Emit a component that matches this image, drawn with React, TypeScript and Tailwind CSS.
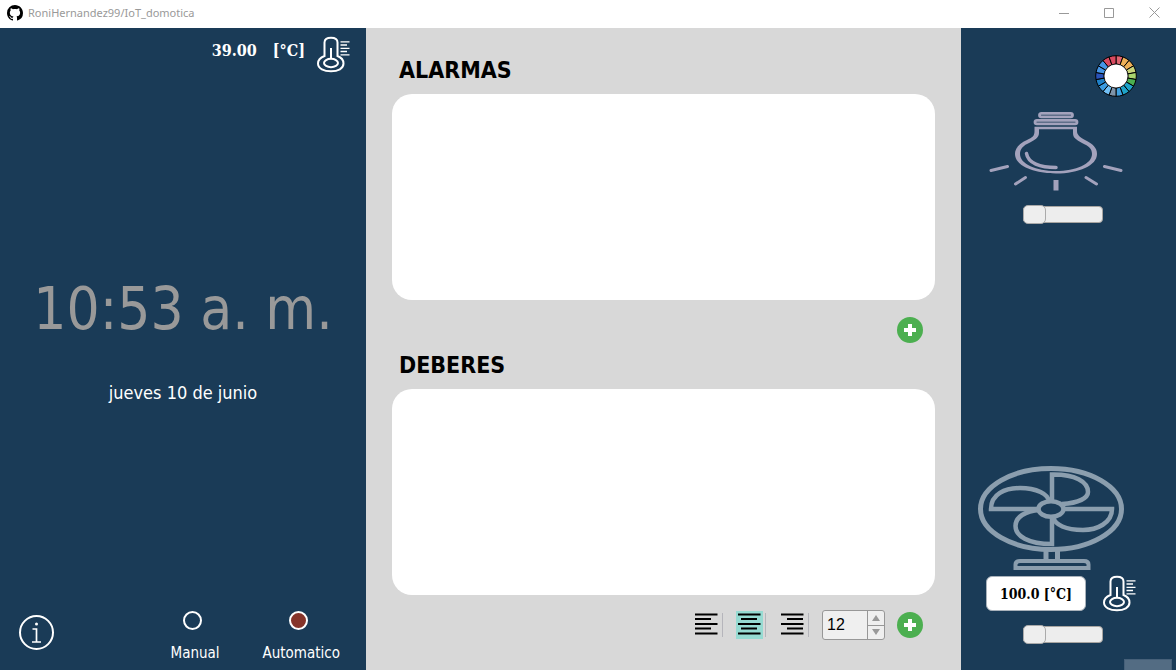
import React from "react";
import { VscGithubInverted } from "react-icons/vsc";

function Thermometer() {
  return (
    <svg width="34" height="37" viewBox="0 0 34 37" fill="none" stroke="white" strokeWidth="2" aria-hidden="true">
      <path d="M7.500 20V6.500C7.500 3 10 1.800 14 1.800S20.500 3 20.500 6.500V20C24.500 21.500 26.500 24 26.500 27.500C26.500 32.500 21 35.300 14 35.300S1 32.500 1 27.500C1 24 3.500 21.500 7.500 20Z" />
      <ellipse cx="14" cy="27" rx="7" ry="4.200" />
      <path d="M14 12V23" />
      <path strokeWidth="1.300" d="M23.500 5.800H32.500M23.500 9H30M23.500 12.300H32.500M23.500 15.500H30M23.500 18.800H32.500" />
    </svg>
  );
}

const WHEEL = ["#e06470", "#edb058", "#edb058", "#c8d47a", "#a9d46e", "#4caf50", "#1fa3c8", "#1fa3c8", "#3ea0e0", "#7d93a8", "#72bff5", "#3b9be0", "#1f80c8", "#2952b8", "#4594e4", "#4594e4", "#d94a60", "#d94a60"];

function ColorWheel() {
  const pt = (r: number, i: number) => {
    const a = (i / WHEEL.length) * Math.PI * 2 - Math.PI / 2;
    return `${21 + r * Math.cos(a)} ${21 + r * Math.sin(a)}`;
  };
  return (
    <svg width="42" height="42" viewBox="0 0 42 42" aria-hidden="true">
      {WHEEL.map((c, i) => (
        <path key={i} fill={c} stroke="black" strokeWidth="1" d={`M${pt(12, i)}L${pt(20.3, i)}A20.3 20.3 0 0 1 ${pt(20.3, i + 1)}L${pt(12, i + 1)}Z`} />
      ))}
      <circle cx="21" cy="21" r="12" fill="white" stroke="black" strokeWidth="0.800" />
    </svg>
  );
}

function Bulb() {
  return (
    <svg width="134" height="80" viewBox="0 0 134 80" fill="none" stroke="#a3a2bc" strokeWidth="2.800" aria-hidden="true">
      <rect x="50.500" y="2.300" width="33" height="3.600" rx="1.800" />
      <rect x="46" y="9.300" width="42" height="3.600" rx="1.800" />
      <path
        fill="#a3a2bc"
        stroke="none"
        fillRule="evenodd"
        d="M45.500 15.800H88V20C88 24 91 26 96 29C104 33 108 37 108 43C108 54.500 90 62.500 67 62.500S26 54.500 26 43C26 37 31 32 38 29C43.500 26.500 45.500 25 45.500 20ZM50 18.300V22C50 26.500 46 29 41 31.500C34 34.500 31 38 31 43C31 53 47 60 67 60S103 53 103 43C103 38 100 35 93 32C87 28.500 84 27 84 22V18.300Z"
      />
      <path strokeWidth="3.500" strokeLinecap="round" d="M37.500 42.500C39 52 51 56.500 67 56.500" />
      <path strokeWidth="3" strokeLinecap="round" d="M2 59.500L18.500 55.500M26.500 73L36.500 66.500M132 59.500L115.500 55.500M107.500 73L97 66.500" />
      <path strokeWidth="5" d="M67 69V79.500" />
    </svg>
  );
}

function Fan() {
  return (
    <svg width="146" height="104" viewBox="0 0 146 104" fill="none" stroke="#8b9eae" strokeWidth="5" aria-hidden="true">
      <ellipse cx="73" cy="43" rx="70.500" ry="40.500" />
      <ellipse cx="73" cy="43" rx="12.500" ry="7.800" strokeWidth="4.500" />
      <g strokeWidth="4.500">
        <path d="M74 35V8.500C97 8 110 16 110 26C110 32 101 37 84 38" />
        <path d="M85 43H134C134 57 119 64 105 64C88 64 77 59 75 51" />
        <path d="M74 51V78C50 78 37.500 70 37.500 60C37.500 51 47 45 62 44" />
        <path d="M61 43H13C13 28 27 22 42 22C58 22 71 28 71 36" />
      </g>
      <path d="M68 84V94M79.500 84V94" />
      <path strokeWidth="4" d="M37.500 102V98.500Q37.500 95 42 95H106Q110.500 95 110.500 98.500V102Z" />
    </svg>
  );
}

function AddButton({ label }: { label: string }) {
  return (
    <button aria-label={label} className="flex size-[26px] shrink-0 items-center justify-center rounded-full bg-[#4caf50]">
      <svg width="12" height="12" viewBox="0 0 12 12" fill="white" aria-hidden="true">
        <path d="M4 0H8V4H12V8H8V12H4V8H0V4H4Z" />
      </svg>
    </button>
  );
}

const ALIGN_LABELS = { left: "Alinear a la izquierda", center: "Centrar", right: "Alinear a la derecha" };

function AlignButton({ kind, active = false }: { kind: "left" | "center" | "right"; active?: boolean }) {
  const inset = kind === "left" ? 0 : kind === "center" ? 3 : 6;
  return (
    <div className="flex items-center gap-[2px]">
      <button
        aria-label={ALIGN_LABELS[kind]}
        aria-pressed={active}
        className={`flex h-7 w-[27px] items-center justify-center ${active ? "bg-[#96dbd2]" : ""}`}
      >
        <svg width="23" height="24" viewBox="0 0 23 24" fill="black" aria-hidden="true">
          <path d="M0 0.500H22.500V2.500H0ZM0 10H22.500V12H0ZM0 19.500H22.500V21.500H0Z" />
          <path d={`M${inset} 5H${inset + 16}V7H${inset}ZM${inset} 14.500H${inset + 16}V16.500H${inset}Z`} />
        </svg>
      </button>
      <span className="h-6 w-px bg-[#b5b5bb]" />
    </div>
  );
}

function Slider({ label }: { label: string }) {
  return (
    <input
      type="range"
      aria-label={label}
      defaultValue={0}
      className="h-[19px] w-20 appearance-none bg-transparent [&::-webkit-slider-runnable-track]:h-[17px] [&::-webkit-slider-runnable-track]:rounded-[4px] [&::-webkit-slider-runnable-track]:border [&::-webkit-slider-runnable-track]:border-[#a8a5a1] [&::-webkit-slider-runnable-track]:bg-[#ededed] [&::-webkit-slider-thumb]:-mt-[2px] [&::-webkit-slider-thumb]:-ml-px [&::-webkit-slider-thumb]:h-[19px] [&::-webkit-slider-thumb]:w-[23px] [&::-webkit-slider-thumb]:appearance-none [&::-webkit-slider-thumb]:rounded-[5px] [&::-webkit-slider-thumb]:border [&::-webkit-slider-thumb]:border-[#aaa] [&::-webkit-slider-thumb]:bg-[#eee]"
    />
  );
}

function ModeOption({ label, checked = false }: { label: string; checked?: boolean }) {
  return (
    <label className="flex flex-col items-center gap-[13px] text-[15px] leading-5 text-white">
      <input type="radio" name="mode" defaultChecked={checked} className="size-[19px] appearance-none rounded-full border-2 border-white checked:bg-[#86342a]" />
      <span className="pl-[6px]">{label}</span>
    </label>
  );
}

function NotesPanel({ title }: { title: string }) {
  return (
    <>
      <h2 className="pl-[7px] text-[23px] leading-7 font-bold text-black">{title}</h2>
      <textarea aria-label={title} className="mt-[10px] h-[206px] w-full resize-none rounded-[20px] bg-white p-4 outline-none" />
    </>
  );
}

export default function App() {
  return (
    <div className="relative flex min-h-screen flex-col bg-[#1a3b57] font-['DejaVu_Sans_Condensed','DejaVu_Sans',sans-serif]">
      <header className="flex h-7 items-center bg-white pb-[2px] pl-[7px]">
        <VscGithubInverted size={16} color="black" aria-hidden="true" />
        <span className="ml-[5px] flex-1 font-['Noto_Sans','Open_Sans',sans-serif] text-[11px] text-[#999]">RoniHernandez99/IoT_domotica</span>
        <div className="flex self-start text-[#999]">
          <button aria-label="Minimizar" className="flex h-6 w-[45px] items-center justify-center">
            <svg width="11" height="11" stroke="currentColor" fill="none" aria-hidden="true"><path d="M0 6.500H10" /></svg>
          </button>
          <button aria-label="Maximizar" className="flex h-6 w-[45px] items-center justify-center">
            <svg width="11" height="11" stroke="currentColor" fill="none" aria-hidden="true"><path d="M.5 1.500H9.500V10.500H.5Z" /></svg>
          </button>
          <button aria-label="Cerrar" className="flex h-6 w-11 items-center justify-center">
            <svg width="11" height="11" stroke="currentColor" fill="none" aria-hidden="true"><path d="M.5 .5L10.500 10.500M10.500 .5L.5 10.500" /></svg>
          </button>
        </div>
      </header>

      <div className="flex flex-1">
        <aside className="flex w-[366px] shrink-0 flex-col">
          <div className="flex justify-end gap-3 pt-2 pr-[15px] text-white">
            <p className="flex gap-4 pt-[3px] font-['DejaVu_Serif_Condensed','DejaVu_Serif',serif] text-base leading-6 font-bold">
              <span>39.00</span>
              <span>[°C]</span>
            </p>
            <Thermometer />
          </div>
          <div className="flex flex-1 flex-col items-center justify-center pb-[6px]">
            <p className="text-[58px] leading-[72px] text-[#999]">10:53 a. m.</p>
            <p className="mt-9 text-lg leading-6 text-white">jueves 10 de junio</p>
          </div>
          <div className="flex items-start pr-[26px] pb-[7px] pl-[18px]">
            <button aria-label="Información" className="mt-1">
              <svg width="36" height="36" viewBox="0 0 36 36" fill="none" stroke="white" strokeWidth="2" aria-hidden="true">
                <circle cx="18.500" cy="17.500" r="16.500" />
                <path strokeWidth="1.700" d="M14.500 14H18.500V27M14 27H23" />
                <circle cx="18.500" cy="9" r="1.500" fill="white" stroke="none" />
              </svg>
            </button>
            <fieldset className="ml-auto flex gap-[37px]">
              <ModeOption label="Manual" />
              <ModeOption label="Automatico" checked />
            </fieldset>
          </div>
        </aside>

        <main className="flex min-w-0 flex-1 flex-col bg-[#d8d8d8] px-[26px] pt-7">
          <NotesPanel title="ALARMAS" />
          <div className="flex justify-end pt-[17px] pr-3 pb-2">
            <AddButton label="Agregar alarma" />
          </div>
          <NotesPanel title="DEBERES" />
          <div className="flex items-center justify-end gap-3 pt-[15px] pr-3">
            <div className="flex gap-[13px] pr-px">
              <AlignButton kind="left" />
              <AlignButton kind="center" active />
              <AlignButton kind="right" />
            </div>
            <div className="flex h-[30px] w-[63px] overflow-hidden rounded-[3px] border border-[#979797] bg-[#efefef]">
              <input aria-label="Tamaño de letra" defaultValue="12" className="w-11 pl-1 font-['Liberation_Sans',sans-serif] text-base text-black outline-none" />
              <div className="flex w-[17px] flex-col border-l border-[#979797] text-[#999]">
                <button aria-label="Aumentar" className="flex flex-1 items-center justify-center border-b border-[#979797]">
                  <svg width="8" height="6" fill="currentColor" aria-hidden="true"><path d="M0 6L4 0L8 6Z" /></svg>
                </button>
                <button aria-label="Disminuir" className="flex flex-1 items-center justify-center">
                  <svg width="8" height="6" fill="currentColor" aria-hidden="true"><path d="M0 0L4 6L8 0Z" /></svg>
                </button>
              </div>
            </div>
            <AddButton label="Agregar deber" />
          </div>
        </main>

        <aside className="flex w-[215px] shrink-0 flex-col pt-[27px]">
          <button aria-label="Elegir color" className="mr-[39px] self-end"><ColorWheel /></button>
          <div className="mt-[14px] flex flex-col pl-7">
            <Bulb />
            <div className="mt-[14px] flex pl-[34px]"><Slider label="Intensidad de luz" /></div>
          </div>
          <div className="mt-auto flex flex-col pb-[26px] pl-[17px]">
            <Fan />
            <div className="mt-[5px] flex items-center gap-[17px] pl-2">
              <output className="flex h-[35px] w-[100px] items-center justify-center rounded-[6px] border border-[#a9b2bb] bg-white font-['DejaVu_Serif_Condensed','DejaVu_Serif',serif] text-sm font-bold text-black">100.0 [°C]</output>
              <Thermometer />
            </div>
            <div className="mt-[13px] flex pl-[45px]"><Slider label="Velocidad del ventilador" /></div>
          </div>
        </aside>
      </div>
      <div className="absolute right-1 bottom-0 h-[11px] w-12 border border-b-0 border-[#466079] bg-[#536c83]" />
    </div>
  );
}
